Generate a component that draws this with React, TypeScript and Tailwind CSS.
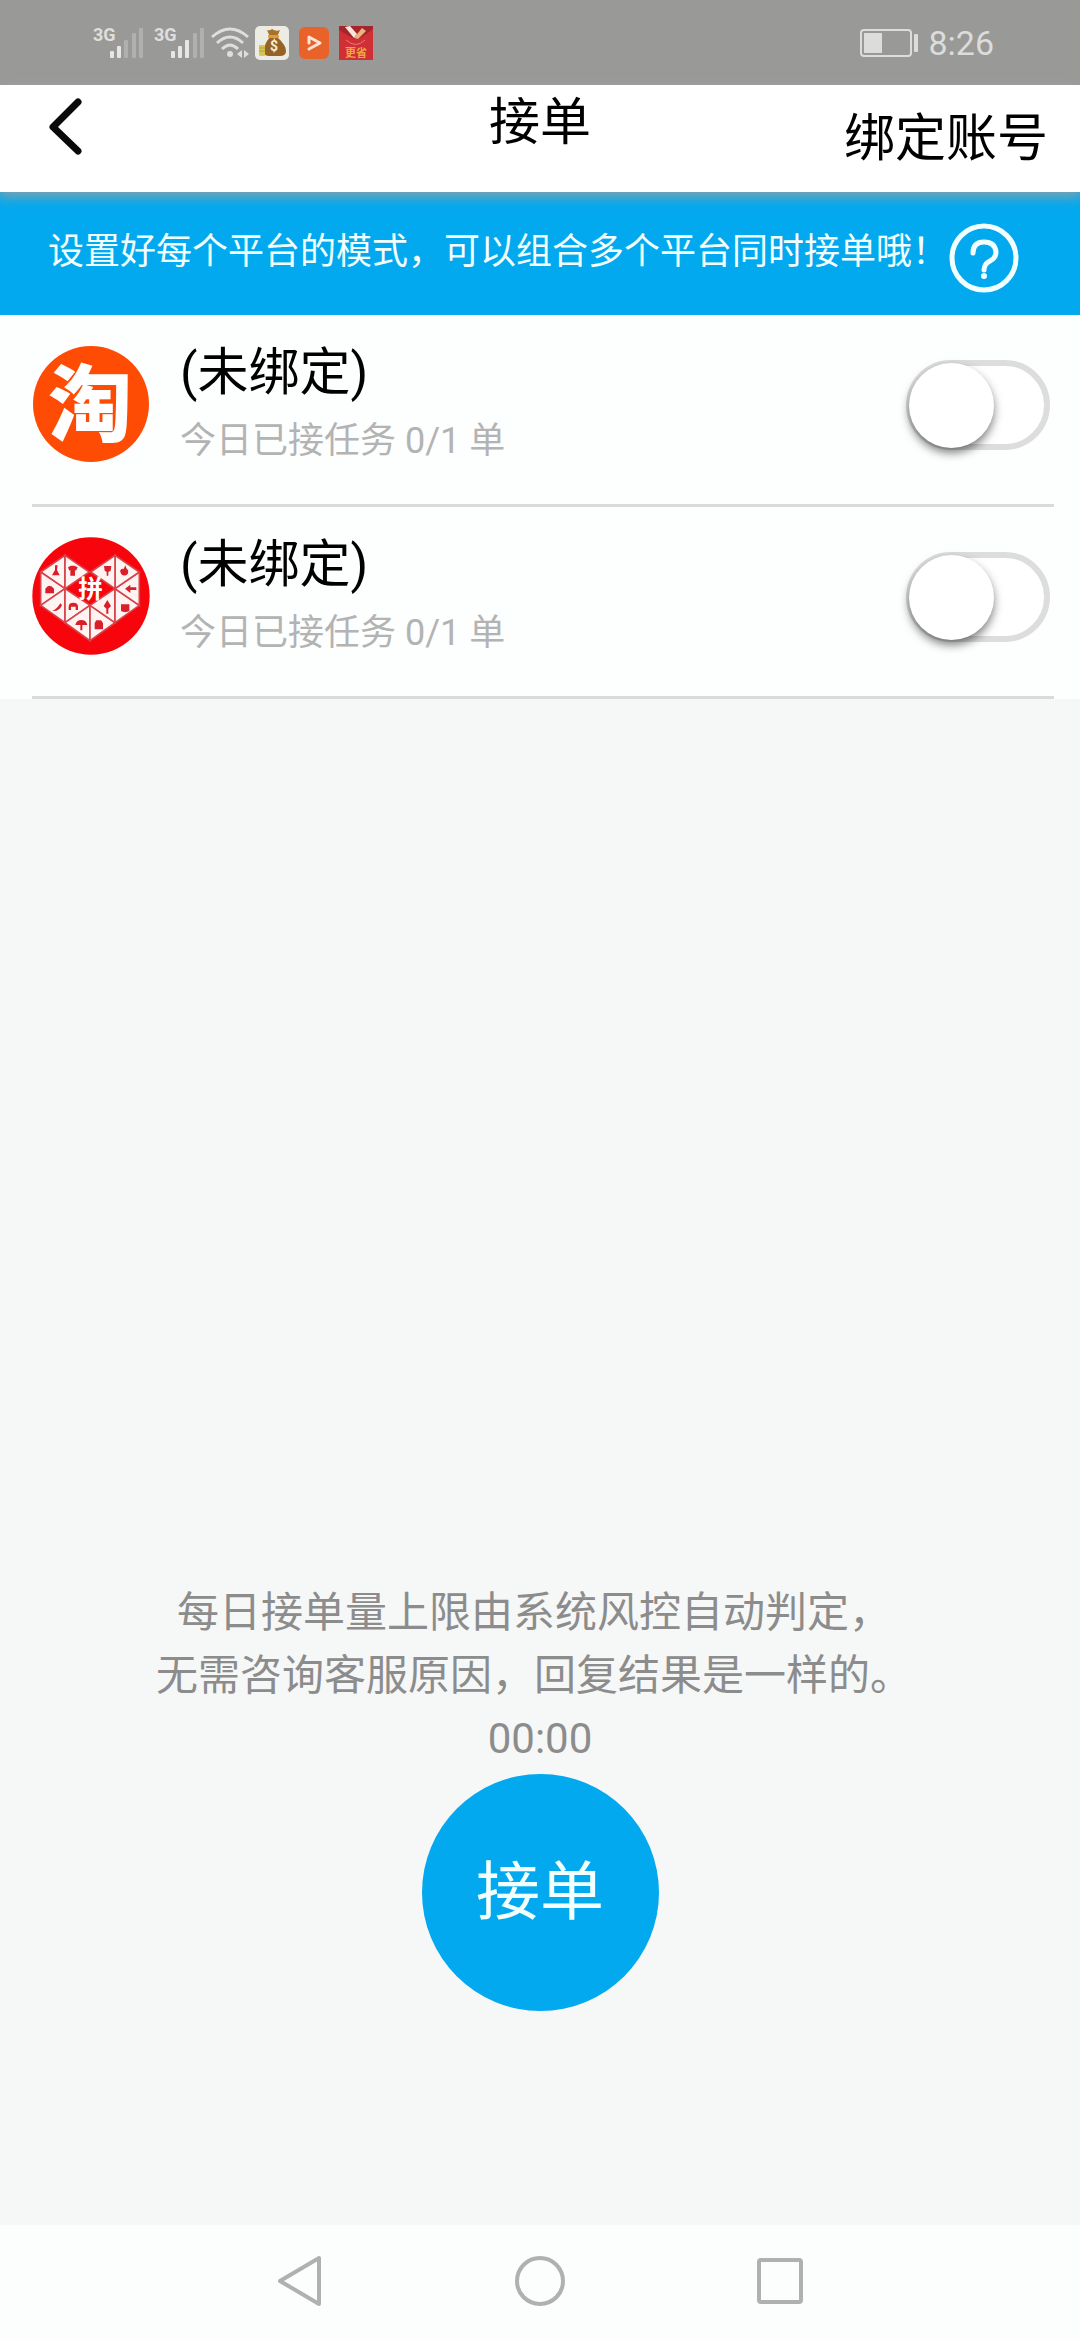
import { useState } from "react";

const platforms = [
    { id: "taobao", name: "淘宝", status: "(未绑定)", done: 0, limit: 1 },
    { id: "pdd", name: "拼多多", status: "(未绑定)", done: 0, limit: 1 },
];

// five bars, the last ones are faded
function Signal({ strong }: { strong: number }) {
    const bars = [
        { x: 17, y: 28, h: 7 },
        { x: 24, y: 23, h: 12 },
        { x: 31, y: 17, h: 18 },
        { x: 39, y: 10, h: 25 },
        { x: 46, y: 5, h: 30 },
    ];
    return (
        <svg className="w-[51px] h-10 overflow-visible" viewBox="0 0 51 40">
            <text x="0" y="18" fontSize="18" fontWeight="700" fontFamily="'Liberation Sans Narrow', Roboto, sans-serif" fill="#dededc">3G</text>
            {bars.map((b, i) => (
                <rect key={i} x={b.x} y={b.y} width="4" height={b.h} rx="1" fill={i < strong ? "#e6e6e4" : "#b0b0ae"} />
            ))}
        </svg>
    );
}

function Wifi() {
    return (
        <svg className="w-10 h-8" viewBox="0 0 40 32" fill="none" stroke="#dededc" strokeWidth="3">
            <path d="M1 10 Q19 -6 37 10" />
            <path d="M6 16 Q19 4 32 16" />
            <path d="M11 22 Q19 14 27 22" />
            <circle cx="19" cy="27" r="3" fill="#dededc" stroke="none" />
            <path d="M31 23v8l-5-4zM33 23v8l5-4z" fill="#dededc" stroke="none" />
        </svg>
    );
}

function MoneyIcon() {
    return (
        <svg className="w-[34px] h-[34px]" viewBox="0 0 34 34">
            <rect width="34" height="34" rx="5" fill="#ececE4" />
            <path d="M12 4q3 1 5-1 4 3 8 1l-3 7h-7z" fill="#a8722c" />
            <path d="M15 11h7q9 8 9 14 0 5-6 5H14q-5 0-5-5 0-7 6-14z" fill="#966326" />
            <rect x="13" y="9" width="11" height="3" rx="1" fill="#e29a3a" />
            <path d="M4 19h6v11H5q-1 0-1-2z" fill="#d9c552" />
            <path d="M4 22h6M4 25h6" stroke="#b7a337" />
            <text x="19" y="25" fontSize="14" fontWeight="700" fontFamily="Roboto, sans-serif" fill="#f6efd8" textAnchor="middle">$</text>
        </svg>
    );
}

function PlayIcon() {
    return (
        <svg className="w-[30px] h-8" viewBox="0 0 30 32">
            <rect width="30" height="32" rx="6" fill="#e9622a" />
            <path d="M10 16V10l11 6-11 6" fill="none" stroke="#fbe3d6" strokeWidth="3" strokeLinecap="round" strokeLinejoin="round" />
        </svg>
    );
}

function CouponIcon() {
    return (
        <svg className="w-[34px] h-[34px]" viewBox="0 0 34 34">
            <rect width="34" height="34" fill="#cf2f35" />
            <path d="M0 0h34v3L20 13h-5L0 4z" fill="#a3262c" />
            <path d="M6 1l5-1 7 8-3 4z" fill="#f7e6dc" />
            <path d="M15 12l8-10 4 3-8 8z" fill="#eeb27c" />
            <path d="M7 14q10 9 19 0" fill="none" stroke="#e77c76" />
            <text x="17" y="31" fontSize="11" fontWeight="700" fontFamily="'Noto Sans CJK SC', sans-serif" fill="#f0a843" textAnchor="middle">更省</text>
        </svg>
    );
}

function TaobaoLogo() {
    return (
        <svg className="w-full h-full overflow-visible" viewBox="0 0 118 118">
            <circle cx="59" cy="59" r="58" fill="#fe4c05" />
            <text x="58" y="90" fontSize="84" fontWeight="900" fontFamily="'Noto Sans CJK SC', sans-serif" fill="#fff" textAnchor="middle">淘</text>
        </svg>
    );
}

const heart = [
    "62,140 135,90 135,190", "135,90 208,140 135,190", "62,140 135,190 62,240", "62,240 135,190 135,292",
    "135,190 210,240 135,292", "135,292 210,240 210,346", "210,240 285,292 210,346", "210,240 285,190 285,292",
    "285,190 358,240 285,292", "285,190 358,140 358,240", "285,90 358,140 285,190", "212,140 285,90 285,190",
];

function PddLogo() {
    return (
        <svg className="w-full h-full" viewBox="36 35 354 354">
            <circle cx="213" cy="212" r="176" fill="#f8040c" />
            <g fill="#fff4f2" stroke="#d8434a" strokeWidth="5">
                {heart.map((p) => <polygon key={p} points={p} />)}
            </g>
            <g fill="#d81f2a">
                <path d="M105 120h8l-2 14 8 16H96l9-16z" />
                <path d="M144 126l9-5h10l10 5-5 10-3-2v17h-14v-17l-3 2z" />
                <path d="M76 190q12-18 26 0v14H76z" />
                <path d="M121 234l5 5q-8 20-29 18 14-6 24-23z" />
                <path d="M146 254v-10q0-12 14-12t14 12v10h-7v-10h-14v10z" />
                <path d="M166 299q3-15 18-15t18 15h-15v16h-6v-16z" />
                <path d="M229 285h14l6 8v19h-25v-19z" />
                <path d="M262 224l11 18-8 8v15h-6v-15l-8-8z" />
                <path d="M303 237h25v20q-12 7-25 0z" />
                <path d="M315 190l16-12v8h18v8h-18v9z" />
                <path d="M300 137q4-9 11-6l5-11 3 9q9 8 4 17-9 9-19 1z" />
                <path d="M252 122h22l-2 14-7 4v11h-5v-11l-6-4z" />
            </g>
            <text x="212" y="218" fontSize="74" fontWeight="700" fontFamily="'Noto Sans CJK SC', sans-serif" fill="#fff" textAnchor="middle">拼</text>
        </svg>
    );
}

export default function App() {
    const [enabled, setEnabled] = useState<Record<string, boolean>>({});

    const toggle = (id: string) => setEnabled((prev) => ({ ...prev, [id]: !prev[id] }));

    return (
        <div className="min-h-screen flex flex-col bg-[#f6f7f7] text-black font-[Roboto,'Noto_Sans_CJK_SC',sans-serif]">

            {/* Status bar */}
            <div className="h-[85px] pl-[93px] pr-[86px] flex items-center justify-between bg-[#999997]">
                <div className="flex items-center gap-[10px]">
                    <Signal strong={2} />
                    <Signal strong={3} />
                    <div className="-ml-1 flex items-center gap-2">
                        <Wifi />
                        <div className="-ml-1 flex items-center gap-[10px]">
                            <MoneyIcon />
                            <PlayIcon />
                            <CouponIcon />
                        </div>
                    </div>
                </div>
                <div className="flex items-center gap-2 text-[#dcdcda]">
                    <svg className="w-[60px] h-7" viewBox="0 0 60 28">
                        <rect x="1" y="1" width="50" height="26" rx="3" fill="none" stroke="currentColor" strokeWidth="2" />
                        <rect x="4" y="4" width="18" height="20" fill="currentColor" />
                        <rect x="54" y="5" width="4" height="18" rx="1" fill="currentColor" />
                    </svg>
                    <span className="text-[34px] leading-none">8:26</span>
                </div>
            </div>

            {/* Header */}
            <header className="relative z-10 h-[107px] px-8 grid grid-cols-[1fr_auto_1fr] items-start bg-white shadow-[0_2px_12px_2px_rgba(160,160,160,0.9)]">
                <button aria-label="返回" className="w-16 pt-3 pl-4">
                    <svg className="w-9 h-[58px]" viewBox="0 0 36 58" fill="none" stroke="#0a0a0a" strokeWidth="7" strokeLinecap="round" strokeLinejoin="round">
                        <path d="M30 5L5 30l25 24" />
                    </svg>
                </button>
                <h1 className="pt-2 text-[51px] leading-[60px]">接单</h1>
                <a href="#bind" className="justify-self-end pt-6 text-[51px] leading-[60px]">绑定账号</a>
            </header>

            {/* Tip banner */}
            <div className="h-[123px] pl-12 pr-[61px] flex items-center justify-between bg-[#03a9ee] text-[#f2ffff]">
                <p className="pb-1 text-[36px] leading-[48px] whitespace-nowrap">设置好每个平台的模式，可以组合多个平台同时接单哦！</p>
                <button aria-label="帮助" className="shrink-0 mt-2">
                    <svg className="w-[70px] h-[70px]" viewBox="0 0 70 70" fill="none" stroke="currentColor" strokeWidth="5">
                        <circle cx="35" cy="35" r="32" />
                        <path d="M24 30q0-11 11-11t12 10q0 6-6 9-6 3-6 9" strokeLinecap="round" />
                        <circle cx="35" cy="53" r="3" fill="currentColor" stroke="none" />
                    </svg>
                </button>
            </div>

            {/* Platforms */}
            <ul className="bg-[#fdfefe] pl-8 pr-[26px]">
                {platforms.map((p) => (
                    <li key={p.id} className="h-48 flex items-start border-b-3 border-[#dadada]">
                        <div className="w-[118px] h-[118px] mt-[30px] shrink-0">
                            {p.id === "taobao" ? <TaobaoLogo /> : <PddLogo />}
                        </div>
                        <div className="flex-1 pl-[30px] pt-7">
                            <p className="text-[51px] leading-[60px]">{p.status}</p>
                            <p className="pt-[14px] text-[36px] leading-[48px] text-[#b3b3b3]">今日已接任务 {p.done}/{p.limit} 单</p>
                        </div>
                        <input
                            type="checkbox"
                            role="switch"
                            aria-label={p.name}
                            checked={!!enabled[p.id]}
                            onChange={() => toggle(p.id)}
                            className="appearance-none relative mt-[45px] mr-1 w-36 h-[90px] rounded-full border-6 border-[#dddddd] bg-white checked:bg-[#03a9ee] before:absolute before:-top-[3px] before:-left-[3px] before:w-[85px] before:h-[85px] before:rounded-full before:bg-white before:shadow-[0_5px_10px_rgba(0,0,0,0.5)] checked:before:left-[51px]"
                        />
                    </li>
                ))}
            </ul>

            {/* Bottom action */}
            <main className="mt-auto pb-[214px] flex flex-col items-center text-[#8c8c8c] text-[42px] leading-[63px]">
                <p className="pr-3 text-center">
                    每日接单量上限由系统风控自动判定，<br />
                    无需咨询客服原因，回复结果是一样的。
                </p>
                <p>00:00</p>
                <button className="mt-1 w-[237px] h-[237px] rounded-full bg-[#03a9ee] text-[#f2ffff] text-[64px]">接单</button>
            </main>

            {/* Navigation keys */}
            <nav className="h-[115px] pb-1 flex items-center justify-center gap-[188px] bg-[#fcfdfd] text-[#b0b0b0]">
                <button aria-label="后退">
                    <svg className="w-[52px] h-[52px]" viewBox="0 0 52 52" fill="none" stroke="currentColor" strokeWidth="4" strokeLinejoin="round">
                        <path d="M45 3v46L6 26z" />
                    </svg>
                </button>
                <button aria-label="主页">
                    <svg className="w-[52px] h-[52px]" viewBox="0 0 52 52" fill="none" stroke="currentColor" strokeWidth="4">
                        <circle cx="26" cy="26" r="23" />
                    </svg>
                </button>
                <button aria-label="最近任务">
                    <svg className="w-[52px] h-[52px]" viewBox="0 0 52 52" fill="none" stroke="currentColor" strokeWidth="4">
                        <rect x="5" y="5" width="42" height="42" rx="2" />
                    </svg>
                </button>
            </nav>
        </div>
    );
}
